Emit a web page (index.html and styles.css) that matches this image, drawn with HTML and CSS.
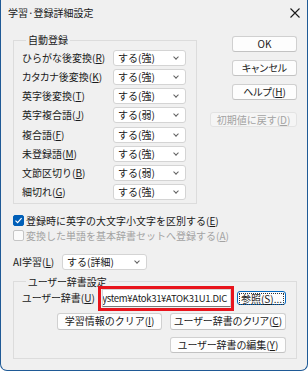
FILE: index.html
```html
<!DOCTYPE html>
<html lang="ja">
<head>
    <meta charset="UTF-8">
    <meta name="viewport" content="width=device-width, initial-scale=1.0">
    <title>学習·登録詳細設定</title>
    <link rel="stylesheet" href="styles.css">
</head>
<body>
    <div class="window">
        <div class="titlebar">
            <span class="title">学習·登録詳細設定</span>
            <svg class="close" width="10" height="10" viewBox="0 0 10 10">
                <path d="M0.5 0.5 L9.5 9.5 M9.5 0.5 L0.5 9.5" stroke="#1a1a1a" stroke-width="1.1" fill="none"/>
            </svg>
        </div>
        <div class="main">
            <div class="top">
                <fieldset class="group auto">
                    <legend>自動登録</legend>
                    <div class="rows">
                        <span class="label">ひらがな後変換(<u>R</u>)</span>
                        <div class="combo">する(強)</div>
                        <span class="label kana">カタカナ後変換(<u>K</u>)</span>
                        <div class="combo">する(強)</div>
                        <span class="label">英字後変換(<u>T</u>)</span>
                        <div class="combo">する(強)</div>
                        <span class="label">英字複合語(<u>J</u>)</span>
                        <div class="combo">する(弱)</div>
                        <span class="label">複合語(<u>F</u>)</span>
                        <div class="combo">する(強)</div>
                        <span class="label">未登録語(<u>M</u>)</span>
                        <div class="combo">する(強)</div>
                        <span class="label">文節区切り(<u>B</u>)</span>
                        <div class="combo">する(弱)</div>
                        <span class="label">細切れ(<u>G</u>)</span>
                        <div class="combo">する(強)</div>
                    </div>
                </fieldset>
                <div class="side">
                    <button class="btn">OK</button>
                    <button class="btn kana">キャンセル</button>
                    <button class="btn kana">ヘルプ(<u>H</u>)</button>
                    <button class="btn reset" disabled>初期値に戻す(<u>D</u>)</button>
                </div>
            </div>

            <div class="checks">
                <div class="check-row">
                    <span class="box checked">
                        <svg width="9" height="9" viewBox="0 0 9 9"><path d="M1.5 4.6 L3.6 6.6 L7.6 2.2" stroke="#fff" stroke-width="1.2" fill="none"/></svg>
                    </span>
                    <span>登録時に英字の大文字小文字を区別する(<u>E</u>)</span>
                </div>
                <div class="check-row disabled">
                    <span class="box"></span>
                    <span>変換した単語を基本辞書セットへ登録する(<u>A</u>)</span>
                </div>
            </div>

            <div class="ai-row">
                <span class="label">AI学習(<u>L</u>)</span>
                <div class="combo ai">する(詳細)</div>
            </div>

            <fieldset class="group user">
                <legend class="kana">ユーザー辞書設定</legend>
                <div class="dict-row">
                    <span class="label dict-label kana">ユーザー辞書(<u>U</u>)</span>
                    <div class="mark">
                        <div class="path"><span>System¥Atok31¥ATOK31U1.DIC</span></div>
                    </div>
                    <button class="btn browse"><span class="focus">参照(<u>S</u>)...</span></button>
                </div>
                <div class="dict-buttons">
                    <button class="btn">学習情報のクリア(<u>I</u>)</button>
                    <button class="btn kana">ユーザー辞書のクリア(<u>C</u>)</button>
                    <button class="btn kana edit">ユーザー辞書の編集(<u>Y</u>)</button>
                </div>
            </fieldset>
        </div>
    </div>
</body>
</html>
```

FILE: styles.css
```css
body {
    margin: 0;
    background: #ffffff;
    font-family: "Noto Sans CJK JP", "Noto Sans", sans-serif;
    font-size: 10px;
    color: #1a1a1a;
}
.window {
    width: 308px;
    height: 371px;
    box-sizing: border-box;
    background: #f0f0f0;
    border: 1px solid #1f5a96;
    border-top: none;
    border-radius: 0 0 7px 7px;
    display: flex;
    flex-direction: column;
}
.titlebar {
    height: 26px;
    display: flex;
    align-items: center;
    justify-content: space-between;
    padding: 0 7px 0 7px;
}
.title {
    line-height: 14px;
}
.close {
    margin-top: -1px;
}
.main {
    padding: 0 10px 0 12px;
}
.kana {
    font-feature-settings: "palt";
}
u {
    text-decoration-thickness: 1px;
    text-underline-offset: 1px;
}

/* group boxes */
.group {
    margin: 0;
    border: 1px solid #dcdcdc;
    min-inline-size: 0;
}
.group legend {
    padding: 0 2px;
    margin-left: 4px;
    line-height: 10px;
}
.auto {
    width: 184px;
    box-sizing: border-box;
    margin-top: 9px;
    padding: 5px 10px 3px 8px;
}
.rows {
    display: grid;
    grid-template-columns: 91px 73px;
    grid-auto-rows: 16px;
    row-gap: 3.15px;
    align-items: center;
}
.label {
    line-height: 14px;
    white-space: nowrap;
}

/* combo boxes */
.combo {
    height: 16px;
    box-sizing: border-box;
    background: #ffffff;
    border: 1px solid #d4d4d4;
    border-radius: 3px;
    padding-left: 4px;
    line-height: 14px;
    position: relative;
}
.combo::after {
    content: "";
    position: absolute;
    right: 7px;
    top: 4px;
    width: 3px;
    height: 3px;
    border-right: 1px solid #606060;
    border-bottom: 1px solid #606060;
    transform: rotate(45deg);
}

/* side buttons */
.top {
    display: flex;
}
.side {
    margin-left: auto;
    margin-top: 10px;
    display: flex;
    flex-direction: column;
    align-items: flex-end;
    gap: 8px;
}
.btn {
    font-family: inherit;
    font-size: 10px;
    color: #1a1a1a;
    background: #fdfdfd;
    border: 1px solid #d0d0d0;
    border-bottom-color: #c2c2c2;
    border-radius: 3px;
    height: 16px;
    line-height: 14px;
    padding: 0;
    width: 65px;
}
.side .reset {
    margin-top: 4px;
    width: 87px;
    height: 15px;
    background: #f5f5f5;
    border-color: #e3e3e3;
    color: #a3a3a3;
}

/* checkboxes */
.checks {
    margin-top: 9px;
}
.check-row {
    display: flex;
    align-items: center;
    height: 15px;
    gap: 2px;
}
.box {
    width: 11px;
    height: 11px;
    box-sizing: border-box;
    border: 1px solid #c5c5c5;
    border-radius: 2px;
    background: #fbfbfb;
    display: flex;
    align-items: center;
    justify-content: center;
}
.box.checked {
    background: #005fb8;
    border-color: #005fb8;
}
.disabled {
    color: #a3a3a3;
}

/* AI row */
.ai-row {
    display: flex;
    align-items: center;
    margin-top: 11px;
}
.ai-row .label {
    width: 49px;
}
.combo.ai {
    width: 85px;
}

/* user dictionary group */
.user {
    margin-top: 7px;
    width: 284px;
    height: 82px;
    box-sizing: border-box;
    padding: 0 10px 0 8px;
}
.dict-row {
    display: flex;
    align-items: center;
    margin-top: -1px;
}
.dict-label {
    width: 76px;
    flex-shrink: 0;
}
.mark {
    width: 136px;
    height: 25px;
    flex-shrink: 0;
    box-sizing: border-box;
    border: 3px solid #e8141c;
    padding: 0 0 1px 1px;
}
.path {
    height: 100%;
    box-sizing: border-box;
    background: #ffffff;
    border: 1px solid #d4d4d4;
    border-bottom-color: #7a7a7a;
    display: flex;
    justify-content: flex-end;
    align-items: center;
    overflow: hidden;
    white-space: nowrap;
    padding-right: 3px;
    font-size: 9.5px;
    letter-spacing: -0.3px;
}
.browse {
    margin-left: 3px;
    width: 49px;
    height: 14px;
    line-height: 10px;
    border-color: #0067c0;
    padding: 1px;
}
.focus {
    display: block;
    border: 1px dotted #333;
    line-height: 10px;
}
.dict-buttons {
    display: grid;
    grid-template-columns: 105px 116px;
    column-gap: 8px;
    row-gap: 7px;
    justify-content: end;
    margin-top: 2px;
}
.dict-buttons .btn {
    width: auto;
    height: 17px;
}
.dict-buttons .edit {
    grid-column: 2;
    height: 16px;
}
```
